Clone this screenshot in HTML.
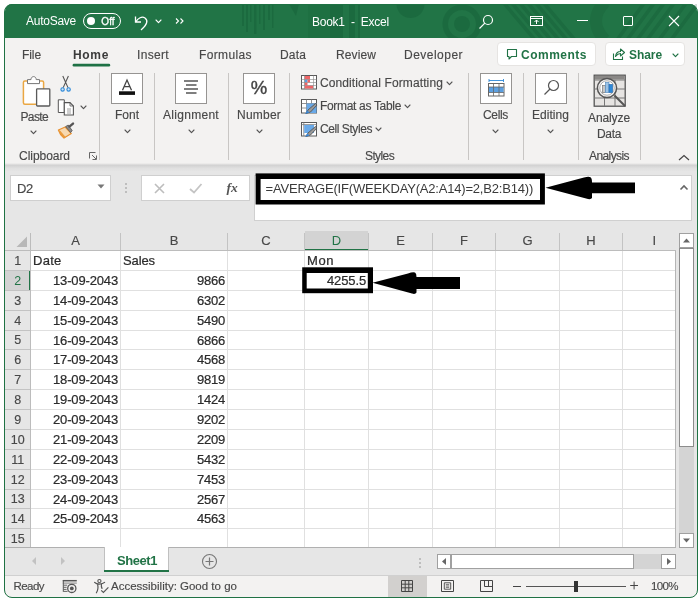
<!DOCTYPE html>
<html lang="en"><head><meta charset="utf-8"><title>Book1 - Excel</title>
<style>
html,body{margin:0;padding:0;width:700px;height:600px;overflow:hidden;background:#fff;}
body{position:relative;font-family:'Liberation Sans', sans-serif;}
#app{position:absolute;left:0;top:0;width:700px;height:600px;overflow:hidden;background:#fff;will-change:transform;}
.a{position:absolute;display:block;}
.t{white-space:pre;}
.win{background:#f3f2f1;border-radius:8px;}
</style></head><body><div id="app">
<div class="a win" style="left:4px;top:4px;width:694px;height:594px;"></div>
<div class="a" style="left:5px;top:4px;width:692px;height:34px;background:#217446;border-radius:7px 7px 0 0;"></div>
<svg class="a" style="left:5px;top:4px" width="692" height="34" viewBox="0 0 692 34"><g fill="#0b4a28" fill-opacity="0.22" stroke="none">
<rect x="237" y="0" width="2" height="22"/><rect x="241" y="0" width="2" height="28"/><rect x="245" y="0" width="1.5" height="18"/><rect x="249" y="0" width="2.5" height="30"/><rect x="254" y="0" width="1.5" height="20"/><rect x="258" y="0" width="2" height="26"/><rect x="263" y="0" width="2" height="16"/><rect x="267" y="0" width="1.5" height="24"/>
<path d="M284 0 H294 L291 12 Z"/>
<rect x="303" y="0" width="22" height="34" fill-opacity="0.10"/>
<rect x="325" y="0" width="13" height="34"/><rect x="344" y="0" width="6" height="34"/><rect x="353" y="0" width="2" height="34" />
<circle cx="405.5" cy="0" r="14"/>
<circle cx="457" cy="20" r="8"/>
<path d="M457 0.5 a19.5 19.5 0 1 0 0.01 0 Z M457 6 a14 14 0 1 1 -0.01 0 Z" fill-rule="evenodd"/>
</g>
<g stroke="#0b4a28" stroke-opacity="0.20" stroke-width="3.5" fill="none">
<path d="M498 -2 L530 36 M506 -2 L538 36 M514 -2 L546 36 M522 -2 L554 36 M530 -2 L562 36 M538 -2 L570 36"/>
<path d="M600 -2 C588 10 588 24 600 36" stroke-width="12" stroke-opacity="0.15"/>
<path d="M640 -2 L612 36 M650 -2 L622 36 M660 -2 L632 36 M670 -2 L642 36 M682 -2 L654 36 M694 -2 L666 36"/>
</g></svg>
<span class="a t" style="left:26px;top:12.0px;line-height:18px;font-size:12px;color:#fff;letter-spacing:-0.26px;">AutoSave</span>
<div class="a" style="left:82.5px;top:13px;width:38px;height:16px;border:1px solid #fff;box-sizing:border-box;border-radius:8px;"></div>
<div class="a" style="left:87px;top:17px;width:8px;height:8px;background:#fff;border-radius:4px;"></div>
<span class="a t" style="left:101.3px;top:13.5px;line-height:15px;font-size:10px;color:#fff;letter-spacing:0.05px;-webkit-text-stroke:0.3px #fff;">Off</span>
<svg class="a" style="left:132px;top:12px" width="20" height="20" viewBox="0 0 20 20"><path d="M3.5 4.5 L3.5 10 L9 10" fill="none" stroke="#fff" stroke-width="1.3"/><path d="M3.8 9.8 C6 6 10 4 13 6 C16.5 8.5 15 13 9 18" fill="none" stroke="#fff" stroke-width="1.3"/></svg>
<svg class="a" style="left:153.5px;top:17.7px" width="9" height="6.6" viewBox="0 0 9 6.6"><path d="M2 2 L4.5 4.6 L7 2" fill="none" stroke="#fff" stroke-width="1.1" stroke-linecap="round" stroke-linejoin="round"/></svg>
<svg class="a" style="left:174px;top:17px" width="12" height="8" viewBox="0 0 12 8"><path d="M2 1.5 L4.5 4 L2 6.5 M6.5 1.5 L9 4 L6.5 6.5" fill="none" stroke="#fff" stroke-width="1.1"/></svg>
<span class="a t" style="left:312px;top:13.0px;line-height:18px;font-size:12px;color:#fff;letter-spacing:-0.25px;">Book1  -  Excel</span>
<svg class="a" style="left:476px;top:12px" width="20" height="20" viewBox="0 0 20 20"><circle cx="12" cy="8" r="4.5" fill="none" stroke="#fff" stroke-width="1.2"/><path d="M8.8 11.2 L3.5 16.5" stroke="#fff" stroke-width="1.2"/></svg>
<svg class="a" style="left:529px;top:15px" width="16" height="13" viewBox="0 0 16 13"><rect x="1.5" y="1.5" width="12" height="9" fill="none" stroke="#fff" stroke-width="1"/><path d="M1.5 3.5 H13.5 M7.5 9 V5 M5.5 7 L7.5 5 L9.5 7" fill="none" stroke="#fff" stroke-width="1"/></svg>
<div class="a" style="left:577px;top:20px;width:11px;height:1px;background:#fff;"></div>
<div class="a" style="left:623px;top:16px;width:10px;height:10px;border:1px solid #fff;box-sizing:border-box;border-radius:1px;"></div>
<svg class="a" style="left:668px;top:15px" width="12" height="12" viewBox="0 0 12 12"><path d="M1 1 L11 11 M11 1 L1 11" stroke="#fff" stroke-width="1.1"/></svg>
<div class="a" style="left:5px;top:38px;width:692px;height:127px;background:#f3f2f1;"></div>
<span class="a t" style="left:22px;top:45.5px;line-height:18px;font-size:12px;color:#484848;letter-spacing:-0.09px;-webkit-text-stroke:0.15px #484848;">File</span>
<span class="a t" style="left:73px;top:45.5px;line-height:18px;font-size:12px;color:#3b3b3b;font-weight:700;letter-spacing:0.66px;">Home</span>
<svg class="a" style="left:70px;top:60px" width="44" height="10" viewBox="0 0 44 10"><rect x="2.6" y="3.8" width="37.6" height="2.7" rx="1.3" fill="#1e7145"/></svg>
<span class="a t" style="left:137px;top:45.5px;line-height:18px;font-size:12px;color:#484848;letter-spacing:0.33px;-webkit-text-stroke:0.15px #484848;">Insert</span>
<span class="a t" style="left:199px;top:45.5px;line-height:18px;font-size:12px;color:#484848;letter-spacing:0.37px;-webkit-text-stroke:0.15px #484848;">Formulas</span>
<span class="a t" style="left:280px;top:45.5px;line-height:18px;font-size:12px;color:#484848;letter-spacing:0.16px;-webkit-text-stroke:0.15px #484848;">Data</span>
<span class="a t" style="left:336px;top:45.5px;line-height:18px;font-size:12px;color:#484848;letter-spacing:0.11px;-webkit-text-stroke:0.15px #484848;">Review</span>
<span class="a t" style="left:404px;top:45.5px;line-height:18px;font-size:12px;color:#484848;letter-spacing:0.48px;-webkit-text-stroke:0.15px #484848;">Developer</span>
<div class="a" style="left:497px;top:42px;width:99px;height:24px;background:#fff;border:1px solid #e6e4e2;box-sizing:border-box;border-radius:4px;"></div>
<svg class="a" style="left:505px;top:47px" width="14" height="14" viewBox="0 0 14 14"><path d="M2.5 2.5 H11.5 V9.5 H6.5 L4 12 V9.5 H2.5 Z" fill="none" stroke="#217346" stroke-width="1.1" stroke-linejoin="round"/></svg>
<span class="a t" style="left:521px;top:45.5px;line-height:18px;font-size:12px;color:#217346;font-weight:700;letter-spacing:0.5px;">Comments</span>
<div class="a" style="left:605px;top:42px;width:80px;height:24px;background:#fff;border:1px solid #e6e4e2;box-sizing:border-box;border-radius:4px;"></div>
<svg class="a" style="left:611px;top:46px" width="16" height="16" viewBox="0 0 16 16"><path d="M2.5 7.5 V13.5 H11.5 V10.5" fill="none" stroke="#217346" stroke-width="1.1"/><path d="M4.5 10.5 C5 7 7 5.5 9.5 5.5 V3 L13.5 6.5 L9.5 10 V7.5 C7.5 7.5 6 8.5 4.5 10.5 Z" fill="none" stroke="#217346" stroke-width="1.1" stroke-linejoin="round"/></svg>
<span class="a t" style="left:629px;top:45.5px;line-height:18px;font-size:12px;color:#217346;font-weight:700;letter-spacing:-0.07px;">Share</span>
<svg class="a" style="left:670.5px;top:51.7px" width="9" height="6.6" viewBox="0 0 9 6.6"><path d="M2 2 L4.5 4.6 L7 2" fill="none" stroke="#217346" stroke-width="1.1" stroke-linecap="round" stroke-linejoin="round"/></svg>
<div class="a" style="left:99px;top:73px;width:1px;height:87px;background:#c8c6c4;"></div>
<div class="a" style="left:154px;top:73px;width:1px;height:87px;background:#c8c6c4;"></div>
<div class="a" style="left:228px;top:73px;width:1px;height:87px;background:#c8c6c4;"></div>
<div class="a" style="left:289px;top:73px;width:1px;height:87px;background:#c8c6c4;"></div>
<div class="a" style="left:468px;top:73px;width:1px;height:87px;background:#c8c6c4;"></div>
<div class="a" style="left:523px;top:73px;width:1px;height:87px;background:#c8c6c4;"></div>
<div class="a" style="left:578px;top:73px;width:1px;height:87px;background:#c8c6c4;"></div>
<div class="a" style="left:640px;top:73px;width:1px;height:87px;background:#c8c6c4;"></div>
<svg class="a" style="left:20px;top:74px" width="32" height="34" viewBox="0 0 32 34"><rect x="3.4" y="7" width="20.2" height="23.2" rx="1.5" fill="#fff" stroke="#eaa743" stroke-width="1.5"/>
<path d="M7.5 9.6 V5.6 H11 C11 1.6 16.2 1.6 16.2 5.6 H19.5 V9.6 Z" fill="#fff" stroke="#777" stroke-width="1"/>
<rect x="16.6" y="14.8" width="13.2" height="17.2" rx="0.8" fill="#fff" stroke="#5a5a5a" stroke-width="1.3"/></svg>
<span class="a t" style="left:20.5px;top:108.3px;line-height:18px;font-size:12px;color:#484848;letter-spacing:-0.64px;-webkit-text-stroke:0.15px #484848;">Paste</span>
<svg class="a" style="left:29.1px;top:129.2px" width="9" height="6.6" viewBox="0 0 9 6.6"><path d="M2 2 L4.5 4.6 L7 2" fill="none" stroke="#555" stroke-width="1.1" stroke-linecap="round" stroke-linejoin="round"/></svg>
<svg class="a" style="left:57px;top:74px" width="16" height="20" viewBox="0 0 16 20"><path d="M5.8 2 L11 13.6 M11.4 2 L6.2 13.6" stroke="#555" stroke-width="1.1" fill="none"/>
<circle cx="5.6" cy="15.4" r="1.7" fill="#cfe4f7" stroke="#2b88d8" stroke-width="1.1"/><circle cx="11.6" cy="15.4" r="1.7" fill="#cfe4f7" stroke="#2b88d8" stroke-width="1.1"/></svg>
<svg class="a" style="left:56px;top:98px" width="20" height="19" viewBox="0 0 20 19"><path d="M2.3 1.8 H8.3 V14.5 H2.3 Z" fill="#fff" stroke="#555" stroke-width="1"/>
<path d="M8.3 4.6 H14 L17.4 8 V17 H8.3 Z" fill="#fff" stroke="#555" stroke-width="1.1"/>
<path d="M14 4.6 V8 H17.4" fill="none" stroke="#555" stroke-width="0.8"/>
<path d="M11 11 H15 M11 13 H15 M11 15 H15" stroke="#888" stroke-width="0.8"/></svg>
<svg class="a" style="left:78.7px;top:104.2px" width="9" height="6.6" viewBox="0 0 9 6.6"><path d="M2 2 L4.5 4.6 L7 2" fill="none" stroke="#555" stroke-width="1.1" stroke-linecap="round" stroke-linejoin="round"/></svg>
<svg class="a" style="left:56px;top:121px" width="20" height="20" viewBox="0 0 20 20"><path d="M2.4 9 L9.2 6 L15.3 12.6 L8 17.1 C5.5 15 3.5 12.5 2.4 9 Z" fill="#f7d9b0" stroke="#e8902f" stroke-width="1.2" stroke-linejoin="round"/>
<path d="M4.5 10 L9.5 16 L8 17.1 C5.5 15 3.5 12.5 2.4 9 Z" fill="#ea9a3c"/>
<path d="M9.6 5.6 L12.2 4 L16.2 9.6 L14.6 11.6 Z" fill="#8a8a8a" stroke="#555" stroke-width="0.8"/>
<path d="M13.4 5.6 L17 2.6" stroke="#555" stroke-width="2.4" stroke-linecap="round"/></svg>
<span class="a t" style="left:19px;top:147.3px;line-height:18px;font-size:12px;color:#484848;letter-spacing:-0.04px;-webkit-text-stroke:0.15px #484848;">Clipboard</span>
<svg class="a" style="left:88px;top:151px" width="10" height="10" viewBox="0 0 10 10"><path d="M1.5 7.5 V1.5 H7.5" fill="none" stroke="#666" stroke-width="1"/><path d="M4 4 L8 8 M8.5 4.5 V8.5 H4.5" fill="none" stroke="#666" stroke-width="1"/></svg>
<div class="a" style="left:111px;top:73px;width:32px;height:31px;background:#fff;border:1px solid #969492;box-sizing:border-box;"></div>
<svg class="a" style="left:111px;top:73px" width="32" height="31" viewBox="0 0 32 31"><path d="M11.5 17.2 L16 7 L20.5 17.2 M13.2 13.7 H18.8" fill="none" stroke="#444" stroke-width="1.3"/><rect x="8" y="18.3" width="16" height="3.6" fill="#111"/></svg>
<span class="a t" style="left:115px;top:106.4px;line-height:18px;font-size:12px;color:#484848;-webkit-text-stroke:0.15px #484848;">Font</span>
<svg class="a" style="left:122.5px;top:128.0px" width="9" height="6.6" viewBox="0 0 9 6.6"><path d="M2 2 L4.5 4.6 L7 2" fill="none" stroke="#555" stroke-width="1.1" stroke-linecap="round" stroke-linejoin="round"/></svg>
<div class="a" style="left:175px;top:73px;width:32px;height:31px;background:#fff;border:1px solid #969492;box-sizing:border-box;"></div>
<svg class="a" style="left:175px;top:73px" width="32" height="31" viewBox="0 0 32 31"><path d="M9 8 H23 M11 12 H21.5 M9 16 H23 M11 20 H21.5" stroke="#555" stroke-width="1.4"/></svg>
<span class="a t" style="left:163px;top:106.4px;line-height:18px;font-size:12px;color:#484848;letter-spacing:0.29px;-webkit-text-stroke:0.15px #484848;">Alignment</span>
<svg class="a" style="left:186.5px;top:128.0px" width="9" height="6.6" viewBox="0 0 9 6.6"><path d="M2 2 L4.5 4.6 L7 2" fill="none" stroke="#555" stroke-width="1.1" stroke-linecap="round" stroke-linejoin="round"/></svg>
<div class="a" style="left:243px;top:73px;width:32px;height:31px;background:#fff;border:1px solid #969492;box-sizing:border-box;"></div>
<svg class="a" style="left:243px;top:73px" width="32" height="31" viewBox="0 0 32 31"><text x="16" y="21" text-anchor="middle" font-family="Liberation Sans, sans-serif" font-size="18.5" fill="#444" stroke="#444" stroke-width="0.4">%</text></svg>
<span class="a t" style="left:237px;top:106.4px;line-height:18px;font-size:12px;color:#484848;letter-spacing:0.22px;-webkit-text-stroke:0.15px #484848;">Number</span>
<svg class="a" style="left:254.5px;top:128.0px" width="9" height="6.6" viewBox="0 0 9 6.6"><path d="M2 2 L4.5 4.6 L7 2" fill="none" stroke="#555" stroke-width="1.1" stroke-linecap="round" stroke-linejoin="round"/></svg>
<svg class="a" style="left:301px;top:75px" width="17" height="16" viewBox="0 0 17 16"><rect x="0.5" y="0.5" width="15" height="13.5" fill="#fff" stroke="#5a5a5a"/>
<rect x="3.5" y="1" width="5.5" height="3.5" fill="#ee6668"/>
<rect x="3.5" y="4.5" width="3" height="3" fill="#5b9fe0"/><rect x="6.5" y="4.5" width="2.5" height="3" fill="#ee6668"/>
<rect x="3.5" y="7.5" width="3" height="3" fill="#ee6668"/>
<rect x="3.5" y="10.5" width="8.5" height="3" fill="#ee6668"/>
<path d="M0.5 4.5 H15.5 M0.5 7.5 H15.5 M0.5 10.5 H15.5 M3.5 0.5 V14 M12.5 0.5 V14" stroke="#888" stroke-width="0.6" fill="none"/></svg>
<span class="a t" style="left:320px;top:74.3px;line-height:18px;font-size:12px;color:#484848;letter-spacing:0.1px;-webkit-text-stroke:0.15px #484848;">Conditional Formatting</span>
<svg class="a" style="left:444.5px;top:80.2px" width="9" height="6.6" viewBox="0 0 9 6.6"><path d="M2 2 L4.5 4.6 L7 2" fill="none" stroke="#555" stroke-width="1.1" stroke-linecap="round" stroke-linejoin="round"/></svg>
<svg class="a" style="left:301px;top:98.5px" width="17" height="16" viewBox="0 0 17 16"><rect x="0.5" y="0.5" width="15" height="13.5" fill="#fff" stroke="#5a5a5a"/>
<path d="M0.5 4.5 H15.5 M0.5 9 H15.5 M5.5 0.5 V14 M10.5 0.5 V14" stroke="#777" stroke-width="0.8" fill="none"/>
<rect x="5.5" y="4.5" width="10" height="9.5" fill="#69a9e8"/><path d="M5 14.5 L7 11 L14.5 4.5 L16 6 L9.5 13 Z" fill="#9a9a9a" stroke="#555" stroke-width="0.9"/><path d="M4 15 L6.2 11.6 L8.6 13.6 Z" fill="#3a86d4"/></svg>
<span class="a t" style="left:320px;top:97.3px;line-height:18px;font-size:12px;color:#484848;letter-spacing:-0.32px;-webkit-text-stroke:0.15px #484848;">Format as Table</span>
<svg class="a" style="left:402.5px;top:103.2px" width="9" height="6.6" viewBox="0 0 9 6.6"><path d="M2 2 L4.5 4.6 L7 2" fill="none" stroke="#555" stroke-width="1.1" stroke-linecap="round" stroke-linejoin="round"/></svg>
<svg class="a" style="left:301px;top:121.5px" width="17" height="16" viewBox="0 0 17 16"><rect x="0.5" y="0.5" width="15" height="13.5" fill="#fff" stroke="#5a5a5a"/>
<path d="M0.5 2.6 H15.5 M2.8 0.5 V14" stroke="#777" stroke-width="0.8" fill="none"/>
<rect x="3.2" y="3" width="9.8" height="8" fill="#69a9e8"/><path d="M5 14.5 L7 11 L14.5 4.5 L16 6 L9.5 13 Z" fill="#9a9a9a" stroke="#555" stroke-width="0.9"/><path d="M4 15 L6.2 11.6 L8.6 13.6 Z" fill="#3a86d4"/></svg>
<span class="a t" style="left:320px;top:120.3px;line-height:18px;font-size:12px;color:#484848;letter-spacing:-0.43px;-webkit-text-stroke:0.15px #484848;">Cell Styles</span>
<svg class="a" style="left:373.5px;top:126.2px" width="9" height="6.6" viewBox="0 0 9 6.6"><path d="M2 2 L4.5 4.6 L7 2" fill="none" stroke="#555" stroke-width="1.1" stroke-linecap="round" stroke-linejoin="round"/></svg>
<span class="a t" style="left:365px;top:147.3px;line-height:18px;font-size:12px;color:#484848;letter-spacing:-0.61px;-webkit-text-stroke:0.15px #484848;">Styles</span>
<div class="a" style="left:480px;top:73px;width:32px;height:31px;background:#fff;border:1px solid #969492;box-sizing:border-box;"></div>
<svg class="a" style="left:480px;top:73px" width="32" height="31" viewBox="0 0 32 31"><rect x="8.5" y="10.5" width="15.5" height="12.5" fill="#fff" stroke="#666"/>
<rect x="9" y="14" width="14.5" height="5.5" fill="#5b9fe0"/>
<path d="M8.5 14 H24 M8.5 19.5 H24 M13.5 10.5 V23 M19 10.5 V23" stroke="#666" stroke-width="0.8"/>
<path d="M9 7.5 H23.5 M9 6 V9 M23.5 6 V9" stroke="#2b88d8" stroke-width="0.9"/></svg>
<span class="a t" style="left:483px;top:106.4px;line-height:18px;font-size:12px;color:#484848;letter-spacing:-0.33px;-webkit-text-stroke:0.15px #484848;">Cells</span>
<svg class="a" style="left:491.0px;top:128.0px" width="9" height="6.6" viewBox="0 0 9 6.6"><path d="M2 2 L4.5 4.6 L7 2" fill="none" stroke="#555" stroke-width="1.1" stroke-linecap="round" stroke-linejoin="round"/></svg>
<div class="a" style="left:535px;top:73px;width:32px;height:31px;background:#fff;border:1px solid #969492;box-sizing:border-box;"></div>
<svg class="a" style="left:535px;top:73px" width="32" height="31" viewBox="0 0 32 31"><circle cx="18.5" cy="12.5" r="5" fill="none" stroke="#555" stroke-width="1.2"/><path d="M15 16 L9.5 21.5" stroke="#555" stroke-width="1.2"/></svg>
<span class="a t" style="left:532px;top:106.4px;line-height:18px;font-size:12px;color:#484848;letter-spacing:0.04px;-webkit-text-stroke:0.15px #484848;">Editing</span>
<svg class="a" style="left:546.0px;top:128.0px" width="9" height="6.6" viewBox="0 0 9 6.6"><path d="M2 2 L4.5 4.6 L7 2" fill="none" stroke="#555" stroke-width="1.1" stroke-linecap="round" stroke-linejoin="round"/></svg>
<svg class="a" style="left:592px;top:73px" width="36" height="36" viewBox="0 0 36 36"><rect x="2.2" y="2.2" width="31" height="31" fill="#e6e4e2" stroke="#555" stroke-width="1.3"/>
<rect x="2.8" y="2.8" width="29.8" height="3.6" fill="#8a8886"/>
<path d="M2 7 H33 M2 16 H33 M2 25 H33 M12.5 7 V33 M23 7 V33" stroke="#777" stroke-width="1"/>
<circle cx="15" cy="15" r="9.6" fill="#f3f2f1" stroke="#555" stroke-width="1.5"/>
<circle cx="15" cy="15" r="7.2" fill="#fff" stroke="#999" stroke-width="0.8"/>
<rect x="10.5" y="12.5" width="3" height="7" fill="#c8c8c8" stroke="#777" stroke-width="0.7"/><rect x="13.5" y="9.5" width="3.5" height="10" fill="#9cc3e6" stroke="#5b8fc0" stroke-width="0.7"/><rect x="17" y="11.5" width="3.5" height="8" fill="#2b88d8" stroke="#2b6cb0" stroke-width="0.7"/>
<path d="M22.5 22.5 L33 33" stroke="#555" stroke-width="2"/></svg>
<span class="a t" style="left:588px;top:108.5px;line-height:18px;font-size:12px;color:#484848;letter-spacing:-0.1px;-webkit-text-stroke:0.15px #484848;">Analyze</span>
<span class="a t" style="left:597px;top:124.5px;line-height:18px;font-size:12px;color:#484848;letter-spacing:-0.34px;-webkit-text-stroke:0.15px #484848;">Data</span>
<span class="a t" style="left:589px;top:147.3px;line-height:18px;font-size:12px;color:#484848;letter-spacing:-0.59px;-webkit-text-stroke:0.15px #484848;">Analysis</span>
<svg class="a" style="left:677px;top:153px" width="14" height="10" viewBox="0 0 14 10"><path d="M2 7 L7 2.5 L12 7" fill="none" stroke="#444" stroke-width="1.2"/></svg>
<div class="a" style="left:5px;top:163px;width:692px;height:9px;background:linear-gradient(#f3f2f1 0,#d2d2d2 25%,#e0e0e0 60%,#e6e6e6);"></div>
<div class="a" style="left:5px;top:171px;width:692px;height:60px;background:#e6e6e6;"></div>
<div class="a" style="left:10px;top:175px;width:101px;height:26px;background:#fff;border:1px solid #cfcfcf;box-sizing:border-box;"></div>
<span class="a t" style="left:17px;top:179.2px;line-height:20px;font-size:13px;color:#484848;letter-spacing:-0.31px;-webkit-text-stroke:0.15px #484848;">D2</span>
<svg class="a" style="left:96px;top:183px" width="10" height="7" viewBox="0 0 10 7"><path d="M1.5 1.5 H8.5 L5 5.5 Z" fill="#777"/></svg>
<div class="a" style="left:125px;top:182.5px;width:2px;height:2px;background:#b0b0b0;border-radius:1px;"></div>
<div class="a" style="left:125px;top:186.5px;width:2px;height:2px;background:#b0b0b0;border-radius:1px;"></div>
<div class="a" style="left:125px;top:190.5px;width:2px;height:2px;background:#b0b0b0;border-radius:1px;"></div>
<div class="a" style="left:141px;top:175px;width:109px;height:26px;background:#fff;border:1px solid #cfcfcf;box-sizing:border-box;"></div>
<svg class="a" style="left:153px;top:182px" width="13" height="13" viewBox="0 0 13 13"><path d="M2 2 L11 11 M11 2 L2 11" stroke="#bdbdbd" stroke-width="1.6"/></svg>
<svg class="a" style="left:188px;top:182px" width="16" height="13" viewBox="0 0 16 13"><path d="M2 7 L6 10.5 L13.5 2" fill="none" stroke="#c4c4c4" stroke-width="1.8"/></svg>
<span class="a t" style="left:226.5px;top:178.0px;line-height:20px;font-size:13.5px;color:#555;font-weight:700;font-style:italic;font-family:'Liberation Serif',serif;letter-spacing:-0.12px;">fx</span>
<div class="a" style="left:254px;top:175px;width:438px;height:46px;background:#fff;border:1px solid #d0d0d0;box-sizing:border-box;"></div>
<svg class="a" style="left:250px;top:170px" width="300" height="40" viewBox="0 0 300 40"><rect x="5.6" y="3.4" width="289.3" height="31.1" fill="#000"/><rect x="10.6" y="9" width="279.4" height="21" fill="#fff"/></svg>
<span class="a t" style="left:265.5px;top:179.0px;line-height:20px;font-size:13px;color:#3a3a3a;letter-spacing:-0.19px;">=AVERAGE(IF(WEEKDAY(A2:A14)=2,B2:B14))</span>
<svg class="a" style="left:544px;top:174px" width="94" height="28" viewBox="0 0 94 28"><path d="M1.5 13.7 L40 3.6 Q44.5 2 46.5 3.2 Q48 4 48 8.5 L91 8.5 L91 19.3 L48 19.3 L48 24 Q47 25.6 44 25 Z" fill="#000"/></svg>
<svg class="a" style="left:678px;top:182.5px" width="12" height="9" viewBox="0 0 12 9"><path d="M2.5 6.5 L6 3 L9.5 6.5" fill="none" stroke="#666" stroke-width="1.6"/></svg>
<div class="a" style="left:5px;top:231px;width:671px;height:317px;background:#fff;"></div>
<div class="a" style="left:5px;top:229px;width:692px;height:21px;background:#e6e6e6;"></div>
<div class="a" style="left:5px;top:231px;width:25px;height:317px;background:#e6e6e6;"></div>
<div class="a" style="left:305px;top:231px;width:63px;height:19px;background:#d3d3d3;"></div>
<div class="a" style="left:305px;top:249px;width:63px;height:2px;background:#217346;"></div>
<div class="a" style="left:5px;top:271px;width:25px;height:19px;background:#d3d3d3;"></div>
<div class="a" style="left:29px;top:271px;width:2px;height:19px;background:#217346;"></div>
<div class="a" style="left:31px;top:270px;width:645px;height:1px;background:#e0e0e0;"></div>
<div class="a" style="left:5px;top:270px;width:25px;height:1px;background:#c3c3c3;"></div>
<div class="a" style="left:31px;top:290px;width:645px;height:1px;background:#e0e0e0;"></div>
<div class="a" style="left:5px;top:290px;width:25px;height:1px;background:#c3c3c3;"></div>
<div class="a" style="left:31px;top:310px;width:645px;height:1px;background:#e0e0e0;"></div>
<div class="a" style="left:5px;top:310px;width:25px;height:1px;background:#c3c3c3;"></div>
<div class="a" style="left:31px;top:330px;width:645px;height:1px;background:#e0e0e0;"></div>
<div class="a" style="left:5px;top:330px;width:25px;height:1px;background:#c3c3c3;"></div>
<div class="a" style="left:31px;top:349px;width:645px;height:1px;background:#e0e0e0;"></div>
<div class="a" style="left:5px;top:349px;width:25px;height:1px;background:#c3c3c3;"></div>
<div class="a" style="left:31px;top:369px;width:645px;height:1px;background:#e0e0e0;"></div>
<div class="a" style="left:5px;top:369px;width:25px;height:1px;background:#c3c3c3;"></div>
<div class="a" style="left:31px;top:389px;width:645px;height:1px;background:#e0e0e0;"></div>
<div class="a" style="left:5px;top:389px;width:25px;height:1px;background:#c3c3c3;"></div>
<div class="a" style="left:31px;top:409px;width:645px;height:1px;background:#e0e0e0;"></div>
<div class="a" style="left:5px;top:409px;width:25px;height:1px;background:#c3c3c3;"></div>
<div class="a" style="left:31px;top:429px;width:645px;height:1px;background:#e0e0e0;"></div>
<div class="a" style="left:5px;top:429px;width:25px;height:1px;background:#c3c3c3;"></div>
<div class="a" style="left:31px;top:449px;width:645px;height:1px;background:#e0e0e0;"></div>
<div class="a" style="left:5px;top:449px;width:25px;height:1px;background:#c3c3c3;"></div>
<div class="a" style="left:31px;top:469px;width:645px;height:1px;background:#e0e0e0;"></div>
<div class="a" style="left:5px;top:469px;width:25px;height:1px;background:#c3c3c3;"></div>
<div class="a" style="left:31px;top:489px;width:645px;height:1px;background:#e0e0e0;"></div>
<div class="a" style="left:5px;top:489px;width:25px;height:1px;background:#c3c3c3;"></div>
<div class="a" style="left:31px;top:508px;width:645px;height:1px;background:#e0e0e0;"></div>
<div class="a" style="left:5px;top:508px;width:25px;height:1px;background:#c3c3c3;"></div>
<div class="a" style="left:31px;top:528px;width:645px;height:1px;background:#e0e0e0;"></div>
<div class="a" style="left:5px;top:528px;width:25px;height:1px;background:#c3c3c3;"></div>
<div class="a" style="left:5px;top:250px;width:671px;height:1px;background:#bcbcbc;"></div>
<div class="a" style="left:120px;top:251px;width:1px;height:296px;background:#e0e0e0;"></div>
<div class="a" style="left:120px;top:233px;width:1px;height:17px;background:#c3c3c3;"></div>
<div class="a" style="left:227px;top:251px;width:1px;height:296px;background:#e0e0e0;"></div>
<div class="a" style="left:227px;top:233px;width:1px;height:17px;background:#c3c3c3;"></div>
<div class="a" style="left:304px;top:251px;width:1px;height:296px;background:#e0e0e0;"></div>
<div class="a" style="left:304px;top:233px;width:1px;height:17px;background:#c3c3c3;"></div>
<div class="a" style="left:368px;top:251px;width:1px;height:296px;background:#e0e0e0;"></div>
<div class="a" style="left:368px;top:233px;width:1px;height:17px;background:#c3c3c3;"></div>
<div class="a" style="left:432px;top:251px;width:1px;height:296px;background:#e0e0e0;"></div>
<div class="a" style="left:432px;top:233px;width:1px;height:17px;background:#c3c3c3;"></div>
<div class="a" style="left:495px;top:251px;width:1px;height:296px;background:#e0e0e0;"></div>
<div class="a" style="left:495px;top:233px;width:1px;height:17px;background:#c3c3c3;"></div>
<div class="a" style="left:559px;top:251px;width:1px;height:296px;background:#e0e0e0;"></div>
<div class="a" style="left:559px;top:233px;width:1px;height:17px;background:#c3c3c3;"></div>
<div class="a" style="left:622px;top:251px;width:1px;height:296px;background:#e0e0e0;"></div>
<div class="a" style="left:622px;top:233px;width:1px;height:17px;background:#c3c3c3;"></div>
<div class="a" style="left:30px;top:233px;width:1px;height:315px;background:#bcbcbc;"></div>
<div class="a" style="left:675px;top:251px;width:1px;height:297px;background:#b5b5b5;"></div>
<svg class="a" style="left:15px;top:235px" width="13" height="13" viewBox="0 0 13 13"><path d="M12 1.5 V12 H1.5 Z" fill="#b8b8b8"/></svg>
<span class="a t" style="left:71.16px;top:231.0px;line-height:20px;font-size:13px;color:#484848;-webkit-text-stroke:0.15px #484848;">A</span>
<span class="a t" style="left:169.66px;top:231.0px;line-height:20px;font-size:13px;color:#484848;-webkit-text-stroke:0.15px #484848;">B</span>
<span class="a t" style="left:261.3px;top:231.0px;line-height:20px;font-size:13px;color:#484848;-webkit-text-stroke:0.15px #484848;">C</span>
<span class="a t" style="left:331.8px;top:231.0px;line-height:20px;font-size:13px;color:#217346;">D</span>
<span class="a t" style="left:396.16px;top:231.0px;line-height:20px;font-size:13px;color:#484848;-webkit-text-stroke:0.15px #484848;">E</span>
<span class="a t" style="left:460.02px;top:231.0px;line-height:20px;font-size:13px;color:#484848;-webkit-text-stroke:0.15px #484848;">F</span>
<span class="a t" style="left:522.44px;top:231.0px;line-height:20px;font-size:13px;color:#484848;-webkit-text-stroke:0.15px #484848;">G</span>
<span class="a t" style="left:586.3px;top:231.0px;line-height:20px;font-size:13px;color:#484848;-webkit-text-stroke:0.15px #484848;">H</span>
<span class="a t" style="left:652.49px;top:231.0px;line-height:20px;font-size:13px;color:#484848;-webkit-text-stroke:0.15px #484848;">I</span>
<span class="a t" style="left:14.22px;top:251.6px;line-height:19px;font-size:12.5px;color:#484848;-webkit-text-stroke:0.15px #484848;">1</span>
<span class="a t" style="left:14.22px;top:271.6px;line-height:19px;font-size:12.5px;color:#217346;">2</span>
<span class="a t" style="left:14.22px;top:291.6px;line-height:19px;font-size:12.5px;color:#484848;-webkit-text-stroke:0.15px #484848;">3</span>
<span class="a t" style="left:14.22px;top:311.6px;line-height:19px;font-size:12.5px;color:#484848;-webkit-text-stroke:0.15px #484848;">4</span>
<span class="a t" style="left:14.22px;top:331.1px;line-height:19px;font-size:12.5px;color:#484848;-webkit-text-stroke:0.15px #484848;">5</span>
<span class="a t" style="left:14.22px;top:350.6px;line-height:19px;font-size:12.5px;color:#484848;-webkit-text-stroke:0.15px #484848;">6</span>
<span class="a t" style="left:14.22px;top:370.6px;line-height:19px;font-size:12.5px;color:#484848;-webkit-text-stroke:0.15px #484848;">7</span>
<span class="a t" style="left:14.22px;top:390.6px;line-height:19px;font-size:12.5px;color:#484848;-webkit-text-stroke:0.15px #484848;">8</span>
<span class="a t" style="left:14.22px;top:410.6px;line-height:19px;font-size:12.5px;color:#484848;-webkit-text-stroke:0.15px #484848;">9</span>
<span class="a t" style="left:10.75px;top:430.6px;line-height:19px;font-size:12.5px;color:#484848;-webkit-text-stroke:0.15px #484848;">10</span>
<span class="a t" style="left:11.21px;top:450.6px;line-height:19px;font-size:12.5px;color:#484848;-webkit-text-stroke:0.15px #484848;">11</span>
<span class="a t" style="left:10.75px;top:470.6px;line-height:19px;font-size:12.5px;color:#484848;-webkit-text-stroke:0.15px #484848;">12</span>
<span class="a t" style="left:10.75px;top:490.1px;line-height:19px;font-size:12.5px;color:#484848;-webkit-text-stroke:0.15px #484848;">13</span>
<span class="a t" style="left:10.75px;top:509.6px;line-height:19px;font-size:12.5px;color:#484848;-webkit-text-stroke:0.15px #484848;">14</span>
<span class="a t" style="left:10.75px;top:530.3px;line-height:19px;font-size:12.5px;color:#484848;-webkit-text-stroke:0.15px #484848;">15</span>
<span class="a t" style="left:33px;top:251.1px;line-height:20px;font-size:13px;color:#2b2b2b;letter-spacing:0.26px;-webkit-text-stroke:0.22px #2b2b2b;">Date</span>
<span class="a t" style="left:123px;top:251.1px;line-height:20px;font-size:13px;color:#2b2b2b;letter-spacing:-0.11px;-webkit-text-stroke:0.22px #2b2b2b;">Sales</span>
<span class="a t" style="left:307px;top:251.1px;line-height:20px;font-size:13px;color:#2b2b2b;letter-spacing:0.57px;-webkit-text-stroke:0.22px #2b2b2b;">Mon</span>
<span class="a t" style="left:53px;top:271.1px;line-height:20px;font-size:13px;color:#2b2b2b;letter-spacing:-0.15px;-webkit-text-stroke:0.22px #2b2b2b;">13-09-2043</span>
<span class="a t" style="left:197px;top:271.1px;line-height:20px;font-size:13px;color:#2b2b2b;letter-spacing:-0.23px;-webkit-text-stroke:0.22px #2b2b2b;">9866</span>
<span class="a t" style="left:53px;top:291.1px;line-height:20px;font-size:13px;color:#2b2b2b;letter-spacing:-0.15px;-webkit-text-stroke:0.22px #2b2b2b;">14-09-2043</span>
<span class="a t" style="left:197px;top:291.1px;line-height:20px;font-size:13px;color:#2b2b2b;letter-spacing:-0.23px;-webkit-text-stroke:0.22px #2b2b2b;">6302</span>
<span class="a t" style="left:53px;top:311.1px;line-height:20px;font-size:13px;color:#2b2b2b;letter-spacing:-0.15px;-webkit-text-stroke:0.22px #2b2b2b;">15-09-2043</span>
<span class="a t" style="left:197px;top:311.1px;line-height:20px;font-size:13px;color:#2b2b2b;letter-spacing:-0.23px;-webkit-text-stroke:0.22px #2b2b2b;">5490</span>
<span class="a t" style="left:53px;top:330.6px;line-height:20px;font-size:13px;color:#2b2b2b;letter-spacing:-0.15px;-webkit-text-stroke:0.22px #2b2b2b;">16-09-2043</span>
<span class="a t" style="left:197px;top:330.6px;line-height:20px;font-size:13px;color:#2b2b2b;letter-spacing:-0.23px;-webkit-text-stroke:0.22px #2b2b2b;">6866</span>
<span class="a t" style="left:53px;top:350.1px;line-height:20px;font-size:13px;color:#2b2b2b;letter-spacing:-0.15px;-webkit-text-stroke:0.22px #2b2b2b;">17-09-2043</span>
<span class="a t" style="left:197px;top:350.1px;line-height:20px;font-size:13px;color:#2b2b2b;letter-spacing:-0.23px;-webkit-text-stroke:0.22px #2b2b2b;">4568</span>
<span class="a t" style="left:53px;top:370.1px;line-height:20px;font-size:13px;color:#2b2b2b;letter-spacing:-0.15px;-webkit-text-stroke:0.22px #2b2b2b;">18-09-2043</span>
<span class="a t" style="left:197px;top:370.1px;line-height:20px;font-size:13px;color:#2b2b2b;letter-spacing:-0.23px;-webkit-text-stroke:0.22px #2b2b2b;">9819</span>
<span class="a t" style="left:53px;top:390.1px;line-height:20px;font-size:13px;color:#2b2b2b;letter-spacing:-0.15px;-webkit-text-stroke:0.22px #2b2b2b;">19-09-2043</span>
<span class="a t" style="left:197px;top:390.1px;line-height:20px;font-size:13px;color:#2b2b2b;letter-spacing:-0.23px;-webkit-text-stroke:0.22px #2b2b2b;">1424</span>
<span class="a t" style="left:53px;top:410.1px;line-height:20px;font-size:13px;color:#2b2b2b;letter-spacing:-0.15px;-webkit-text-stroke:0.22px #2b2b2b;">20-09-2043</span>
<span class="a t" style="left:197px;top:410.1px;line-height:20px;font-size:13px;color:#2b2b2b;letter-spacing:-0.23px;-webkit-text-stroke:0.22px #2b2b2b;">9202</span>
<span class="a t" style="left:53px;top:430.1px;line-height:20px;font-size:13px;color:#2b2b2b;letter-spacing:-0.15px;-webkit-text-stroke:0.22px #2b2b2b;">21-09-2043</span>
<span class="a t" style="left:197px;top:430.1px;line-height:20px;font-size:13px;color:#2b2b2b;letter-spacing:-0.23px;-webkit-text-stroke:0.22px #2b2b2b;">2209</span>
<span class="a t" style="left:53px;top:450.1px;line-height:20px;font-size:13px;color:#2b2b2b;letter-spacing:-0.15px;-webkit-text-stroke:0.22px #2b2b2b;">22-09-2043</span>
<span class="a t" style="left:197px;top:450.1px;line-height:20px;font-size:13px;color:#2b2b2b;letter-spacing:-0.23px;-webkit-text-stroke:0.22px #2b2b2b;">5432</span>
<span class="a t" style="left:53px;top:470.1px;line-height:20px;font-size:13px;color:#2b2b2b;letter-spacing:-0.15px;-webkit-text-stroke:0.22px #2b2b2b;">23-09-2043</span>
<span class="a t" style="left:197px;top:470.1px;line-height:20px;font-size:13px;color:#2b2b2b;letter-spacing:-0.23px;-webkit-text-stroke:0.22px #2b2b2b;">7453</span>
<span class="a t" style="left:53px;top:489.6px;line-height:20px;font-size:13px;color:#2b2b2b;letter-spacing:-0.15px;-webkit-text-stroke:0.22px #2b2b2b;">24-09-2043</span>
<span class="a t" style="left:197px;top:489.6px;line-height:20px;font-size:13px;color:#2b2b2b;letter-spacing:-0.23px;-webkit-text-stroke:0.22px #2b2b2b;">2567</span>
<span class="a t" style="left:53px;top:509.1px;line-height:20px;font-size:13px;color:#2b2b2b;letter-spacing:-0.15px;-webkit-text-stroke:0.22px #2b2b2b;">25-09-2043</span>
<span class="a t" style="left:197px;top:509.1px;line-height:20px;font-size:13px;color:#2b2b2b;letter-spacing:-0.23px;-webkit-text-stroke:0.22px #2b2b2b;">4563</span>
<svg class="a" style="left:300px;top:265px" width="80" height="32" viewBox="0 0 80 32"><rect x="2.2" y="2.3" width="70.8" height="25.9" fill="#000"/><rect x="6.7" y="8" width="61.1" height="15.5" fill="#fff"/></svg>
<span class="a t" style="left:327px;top:271.3px;line-height:20px;font-size:13px;color:#2b2b2b;letter-spacing:-0.13px;-webkit-text-stroke:0.22px #2b2b2b;">4255.5</span>
<svg class="a" style="left:371px;top:269px" width="92" height="28" viewBox="0 0 92 28"><path d="M1.5 13.8 L37 4.6 Q42 2.6 44 3.6 Q45.5 4.4 45.5 8 L89 8 L89 20 L45.5 20 L45.5 23.5 Q44.5 25.6 41 24.6 Z" fill="#000"/></svg>
<div class="a" style="left:676px;top:229px;width:21px;height:319px;background:#e6e6e6;"></div>
<div class="a" style="left:679px;top:233px;width:15px;height:15px;background:#fff;border:1px solid #a0a0a0;box-sizing:border-box;"></div>
<svg class="a" style="left:679px;top:233px" width="15" height="15" viewBox="0 0 15 15"><path d="M4 9.5 L7.5 5.5 L11 9.5 Z" fill="#666"/></svg>
<div class="a" style="left:679px;top:248px;width:15px;height:199px;background:#fff;border:1px solid #8c8c8c;box-sizing:border-box;"></div>
<div class="a" style="left:679px;top:447px;width:15px;height:86px;background:#d4d4d4;"></div>
<div class="a" style="left:679px;top:533px;width:15px;height:15px;background:#fff;border:1px solid #a0a0a0;box-sizing:border-box;"></div>
<svg class="a" style="left:679px;top:533px" width="15" height="15" viewBox="0 0 15 15"><path d="M4 5.5 L7.5 9.5 L11 5.5 Z" fill="#666"/></svg>
<div class="a" style="left:5px;top:548px;width:692px;height:28px;background:#e6e6e6;"></div>
<div class="a" style="left:5px;top:547px;width:671px;height:1px;background:#b0b0b0;"></div>
<svg class="a" style="left:31px;top:556px" width="6" height="10" viewBox="0 0 6 10"><path d="M5 1 L1 5 L5 9 Z" fill="#c2c2c2"/></svg>
<svg class="a" style="left:60px;top:556px" width="6" height="10" viewBox="0 0 6 10"><path d="M1 1 L5 5 L1 9 Z" fill="#c2c2c2"/></svg>
<div class="a" style="left:104px;top:547px;width:65px;height:24px;background:#fff;border-right:1px solid #c0c0c0;border-left:1px solid #c0c0c0;box-sizing:border-box;"></div>
<div class="a" style="left:104px;top:570px;width:65px;height:2px;background:#217346;"></div>
<span class="a t" style="left:117px;top:551.0px;line-height:20px;font-size:13px;color:#217346;font-weight:700;letter-spacing:-0.44px;">Sheet1</span>
<svg class="a" style="left:201px;top:553px" width="17" height="17" viewBox="0 0 17 17"><circle cx="8.5" cy="8.5" r="7" fill="none" stroke="#777" stroke-width="1.1"/><path d="M8.5 4.5 V12.5 M4.5 8.5 H12.5" stroke="#777" stroke-width="1.2"/></svg>
<div class="a" style="left:419px;top:557.5px;width:2px;height:2px;background:#b0b0b0;border-radius:1px;"></div>
<div class="a" style="left:419px;top:561.5px;width:2px;height:2px;background:#b0b0b0;border-radius:1px;"></div>
<div class="a" style="left:419px;top:565.5px;width:2px;height:2px;background:#b0b0b0;border-radius:1px;"></div>
<div class="a" style="left:437px;top:554px;width:14px;height:15px;background:#fff;border:1px solid #a0a0a0;box-sizing:border-box;"></div>
<svg class="a" style="left:437px;top:554px" width="14" height="15" viewBox="0 0 14 15"><path d="M9 4 L5 7.5 L9 11 Z" fill="#666"/></svg>
<div class="a" style="left:451px;top:554px;width:183px;height:15px;background:#fff;border:1px solid #a0a0a0;box-sizing:border-box;"></div>
<div class="a" style="left:634px;top:554px;width:27px;height:15px;background:#d4d4d4;"></div>
<div class="a" style="left:661px;top:554px;width:15px;height:15px;background:#fff;border:1px solid #a0a0a0;box-sizing:border-box;"></div>
<svg class="a" style="left:662px;top:554px" width="14" height="15" viewBox="0 0 14 15"><path d="M5 4 L9 7.5 L5 11 Z" fill="#666"/></svg>
<div class="a" style="left:5px;top:575px;width:692px;height:22.5px;background:#f3f2f1;border-radius:0 0 7px 7px;"></div>
<div class="a" style="left:5px;top:575px;width:692px;height:1px;background:#d0d0d0;"></div>
<span class="a t" style="left:13.5px;top:578.0px;line-height:17px;font-size:11.5px;color:#484848;letter-spacing:-0.55px;-webkit-text-stroke:0.15px #484848;">Ready</span>
<svg class="a" style="left:62px;top:579px" width="17" height="15" viewBox="0 0 17 15"><path d="M0.8 1.7 H14.8" stroke="#555" stroke-width="1.5"/><path d="M0.8 4.1 H14.8" stroke="#666" stroke-width="0.8"/><path d="M1.3 1 V12.8" stroke="#555" stroke-width="1"/><path d="M1.5 6.2 H5.2 M1.5 8.3 H4.6 M1.5 10.4 H4.6 M1.5 12.4 H5.6" stroke="#555" stroke-width="0.9"/><circle cx="9.8" cy="9.4" r="4.1" fill="#f3f2f1" stroke="#555" stroke-width="1.3"/><circle cx="9.8" cy="9.4" r="1.9" fill="#555"/></svg>
<svg class="a" style="left:93px;top:578px" width="18" height="17" viewBox="0 0 18 17"><circle cx="6.4" cy="3.1" r="1.6" fill="none" stroke="#555" stroke-width="1.1"/><path d="M1.6 4.4 C3.6 6.6 9.4 6.6 11.6 4.4 M4.6 6.2 C5.2 9 5.2 12 3.4 14.8 M8.4 6.2 C8.2 8 8.4 9.4 9 10.4" fill="none" stroke="#555" stroke-width="1.2" stroke-linecap="round"/><path d="M8.2 12.4 L10.4 14.5 L15.4 9.4" fill="none" stroke="#555" stroke-width="1.2"/></svg>
<span class="a t" style="left:111px;top:578.0px;line-height:17px;font-size:11.5px;color:#484848;-webkit-text-stroke:0.15px #484848;">Accessibility: Good to go</span>
<div class="a" style="left:388px;top:576px;width:39px;height:21px;background:#d2d0ce;"></div>
<svg class="a" style="left:400px;top:579px" width="15" height="15" viewBox="0 0 15 15"><path d="M1.5 1.5 H12.5 V12.5 H1.5 Z M1.5 5.2 H12.5 M1.5 8.8 H12.5 M5.2 1.5 V12.5 M8.8 1.5 V12.5" fill="none" stroke="#444" stroke-width="1"/></svg>
<svg class="a" style="left:440px;top:579px" width="15" height="15" viewBox="0 0 15 15"><path d="M1.5 1.5 H13.5 V12.5 H1.5 Z" fill="none" stroke="#444" stroke-width="1"/><path d="M4.3 3.8 H10.7 V10.2 H4.3 Z" fill="none" stroke="#444" stroke-width="0.9"/><path d="M5.8 5.6 H9.2 M5.8 7 H9.2 M5.8 8.4 H9.2" stroke="#444" stroke-width="0.7"/></svg>
<svg class="a" style="left:479px;top:579px" width="16" height="15" viewBox="0 0 16 15"><path d="M1.5 1.5 H13.5 V12.5 H1.5 Z M5.5 1.5 V7.5 H13.5 M9.5 1.5 V7.5" fill="none" stroke="#444" stroke-width="1"/></svg>
<div class="a" style="left:513px;top:586px;width:8px;height:1px;background:#444;"></div>
<div class="a" style="left:526px;top:586px;width:100px;height:1px;background:#555;"></div>
<div class="a" style="left:574px;top:581px;width:4px;height:11px;background:#333;"></div>
<svg class="a" style="left:629px;top:580px" width="11" height="11" viewBox="0 0 11 11"><path d="M1.2 5.5 H9 M5.1 1.6 V9.4" stroke="#444" stroke-width="1"/></svg>
<span class="a t" style="left:651px;top:577.5px;line-height:17px;font-size:11.5px;color:#484848;letter-spacing:-0.61px;-webkit-text-stroke:0.15px #484848;">100%</span>
<div class="a" style="left:4px;top:4px;width:694px;height:594px;border:1px solid #1f7244;border-radius:8px;box-sizing:border-box;"></div>
</div></body></html>
